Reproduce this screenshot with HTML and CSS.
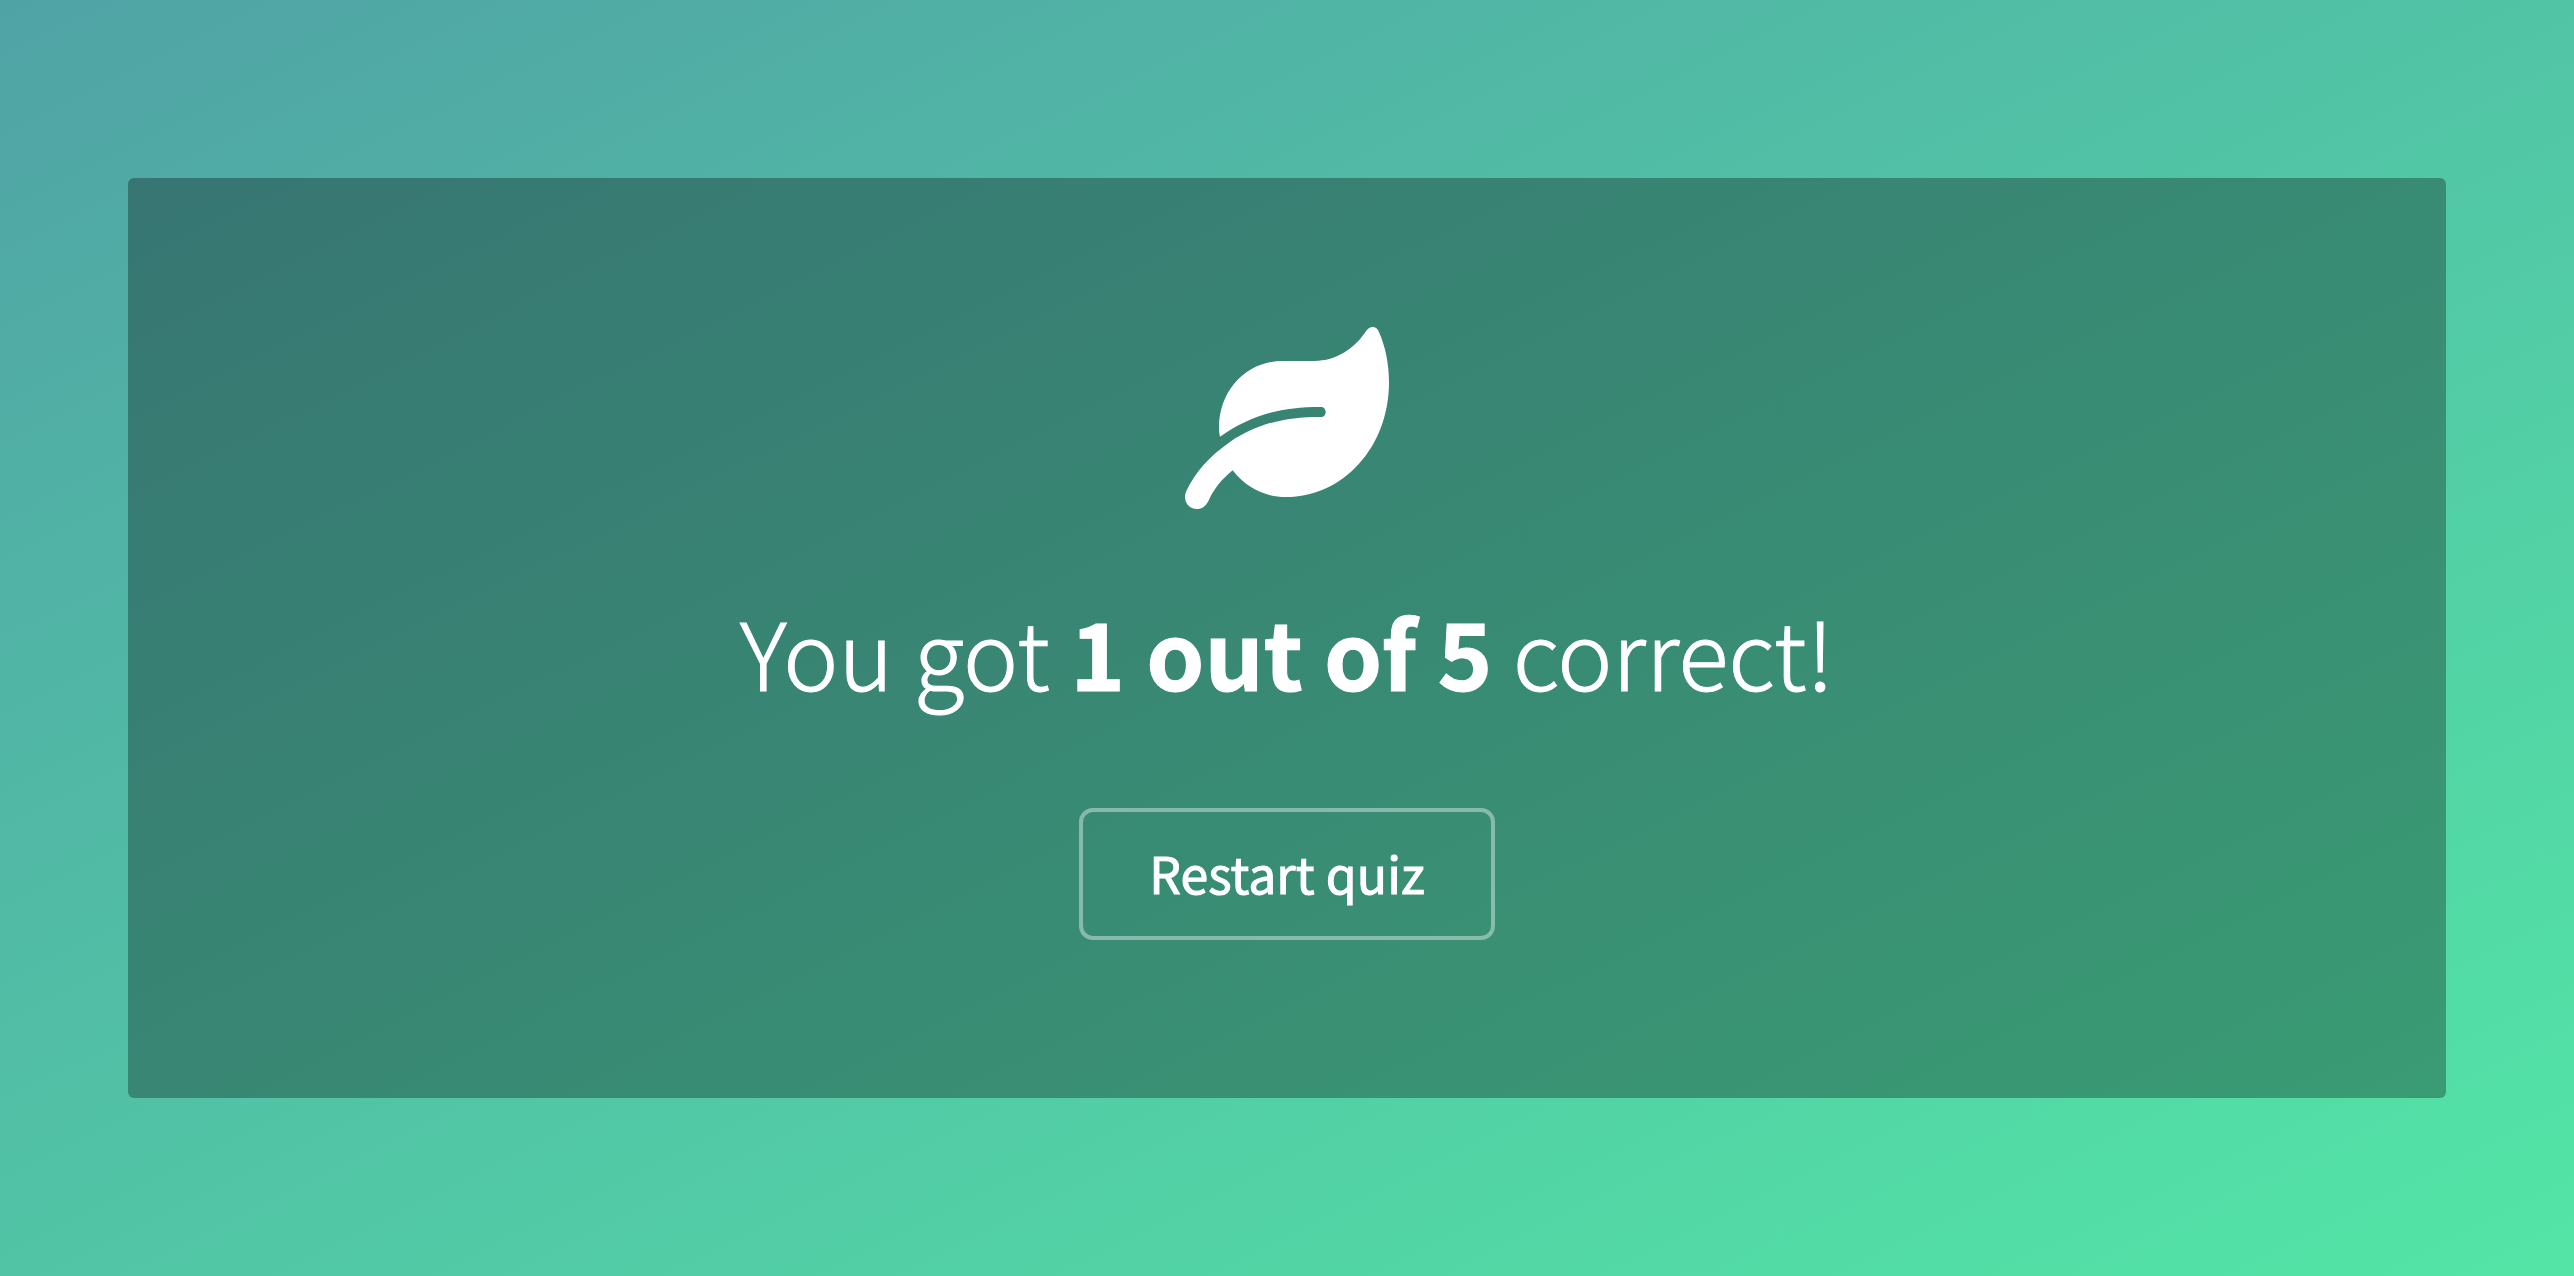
FILE: index.html
```html
<!DOCTYPE html>
<html lang="en">
<head>
<meta charset="utf-8">
<meta name="viewport" content="width=device-width, initial-scale=1">
<title>Quiz results</title>
<link rel="stylesheet" href="styles.css">
</head>
<body>
<main class="result">
  <svg class="result-icon" viewBox="76 82 612 546" aria-hidden="true"><path fill="currentColor" d="M639 82C648 82 654 88 657 95C677 140 688 192 688 248C688 440 552 592 378 592C312 592 258 562 219 512C185 540 165 565 148 600C141 617 128 628 111 628C91 628 76 612 76 592C76 585 78 579 81 572C105 520 150 468 212 426C290 374 370 352 484 352C492 352 498 346 498 337C498 328 492 322 484 322C350 322 270 350 181 411Q178 400 178 384C178 272 260 184 368 184L464 184C530 184 585 147 621 92C626 86 631 82 639 82Z"/></svg>
  <h1 class="result-score">You got <strong>1 out of 5</strong> correct!</h1>
  <button class="result-restart" type="button">Restart quiz</button>
</main>
</body>
</html>
```
FILE: styles.css
```css
* {
  box-sizing: border-box;
}

body {
  min-height: 100vh;
  margin: 0;
  padding: 128px;
  display: flex;
  align-items: center;
  color: #fff;
  background: linear-gradient(to bottom right, #50a3a5, #53e5a6);
  font-family: "Source Sans Pro", "Noto Sans CJK JP", sans-serif;
  -webkit-text-stroke: 1px currentColor;
}

.result {
  flex: 1;
  display: flex;
  flex-direction: column;
  align-items: center;
  padding: 149px 64px 158px;
  border-radius: 6px;
  background: rgba(0, 0, 0, 0.3);
}

.result-icon {
  width: 204px;
  height: 182px;
}

.result-score {
  margin: 72px 0 87px;
  font-size: 93px;
  line-height: 140px;
  font-weight: 300;
  text-align: center;
}

.result-score strong {
  font-weight: 700;
}

.result-restart {
  padding: 30px 66px 34px;
  border: 4px solid rgba(255, 255, 255, 0.4);
  border-radius: 14px;
  color: inherit;
  background: transparent;
  font-family: inherit;
  font-size: 50px;
  font-weight: 400;
  line-height: 60px;
  cursor: pointer;
}
```
